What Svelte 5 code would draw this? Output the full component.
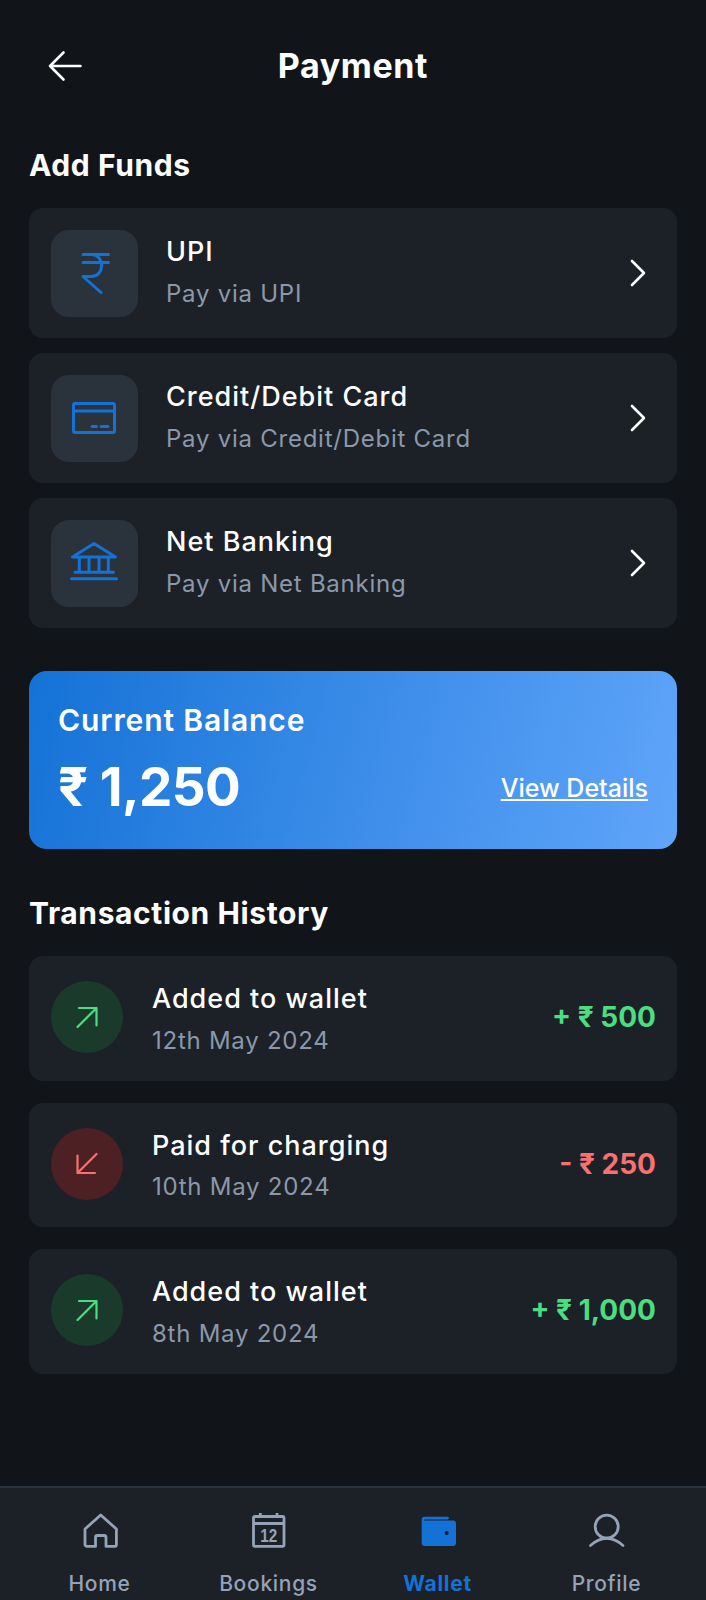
<script>
    const methods = [
        { id: 'upi', title: 'UPI', sub: 'Pay via UPI' },
        { id: 'card', title: 'Credit/Debit Card', sub: 'Pay via Credit/Debit Card' },
        { id: 'bank', title: 'Net Banking', sub: 'Pay via Net Banking' }
    ];

    const transactions = [
        { title: 'Added to wallet', date: '12th May 2024', amount: '+ ₹ 500', kind: 'in' },
        { title: 'Paid for charging', date: '10th May 2024', amount: '- ₹ 250', kind: 'out' },
        { title: 'Added to wallet', date: '8th May 2024', amount: '+ ₹ 1,000', kind: 'in' }
    ];
</script>

<div class="page">
    <header class="top">
        <button class="back" aria-label="Back">
            <svg width="36" height="36" viewBox="0 0 36 36" fill="none" stroke="currentColor" stroke-width="2.6" stroke-linecap="round" stroke-linejoin="round">
                <path d="M2 18H32.5M15.5 4.5L2 18L15.5 31.5" />
            </svg>
        </button>
        <h1>Payment</h1>
    </header>

    <main class="content">
        <h2>Add Funds</h2>
        <div class="methods">
            {#each methods as m}
                <div class="method">
                    <div class="method-icon">
                        <svg width="48" height="48" viewBox="0 0 48 48" fill="none" stroke="currentColor" stroke-width="3" stroke-linecap="round" stroke-linejoin="round">
                            {#if m.id === 'upi'}
                                <path d="M13 5.5H38.5M13 13.5H38.5M13 27.5L31 43.5M13 27.5H21.5C35 27.5 35 5.5 21.5 5.5" />
                            {:else if m.id === 'card'}
                                <rect x="3.5" y="9.5" width="41" height="29" rx="1.5" />
                                <path d="M3.5 17H44.5M22 32.5H26.5M31 32.5H38" />
                            {:else}
                                <path d="M2.5 18L24 4.5L45.5 18ZM9.3 18V33.3M19 18V33.3M29 18V33.3M38.3 18V33.3M5 33.3H43.5M1.5 39.7H46.5" />
                            {/if}
                        </svg>
                    </div>
                    <div class="stack">
                        <div class="title">{m.title}</div>
                        <div class="sub">{m.sub}</div>
                    </div>
                    <svg class="chevron" width="18" height="30" viewBox="0 0 18 30" fill="none" stroke="currentColor" stroke-width="2.6" stroke-linecap="round" stroke-linejoin="round">
                        <path d="M3 3L15 15L3 27" />
                    </svg>
                </div>
            {/each}
        </div>

        <section class="balance">
            <div class="balance-label">Current Balance</div>
            <div class="balance-row">
                <div class="balance-amount">₹ 1,250</div>
                <span class="balance-link">View Details</span>
            </div>
        </section>

        <h2 class="history">Transaction History</h2>
        <div class="transactions">
            {#each transactions as t}
                <div class="tx">
                    <div class="tx-icon {t.kind}">
                        <svg width="24" height="24" viewBox="0 0 24 24" fill="none" stroke="currentColor" stroke-width="2.2" stroke-linecap="round" stroke-linejoin="round">
                            {#if t.kind === 'in'}
                                <path d="M2.5 22L21.5 3M4 3H21.5V20.5" />
                            {:else}
                                <path d="M21.5 2L2.5 21M20 21H2.5V3.5" />
                            {/if}
                        </svg>
                    </div>
                    <div class="stack">
                        <div class="title">{t.title}</div>
                        <div class="sub">{t.date}</div>
                    </div>
                    <div class="tx-amount {t.kind}">{t.amount}</div>
                </div>
            {/each}
        </div>
    </main>

    <nav class="tabs">
        <div class="tab">
            <svg width="40" height="40" viewBox="0 0 40 40" fill="none" stroke="currentColor" stroke-width="2.8" stroke-linejoin="round">
                <path d="M5 19L20.7 5L36.4 19V34.4a2 2 0 0 1-2 2H26V27.5a2 2 0 0 0-2-2H17.5a2 2 0 0 0-2 2V36.4H7a2 2 0 0 1-2-2Z" />
            </svg>
            <span>Home</span>
        </div>
        <div class="tab">
            <svg width="40" height="40" viewBox="0 0 40 40" fill="none" stroke="currentColor" stroke-width="2.8" stroke-linejoin="round">
                <rect x="4.5" y="6.5" width="30.5" height="29.8" rx="1.5" />
                <path d="M4.5 13.5H35M11.3 3V8M28 3V8" />
                <text class="cal-day" x="19.7" y="31.7" text-anchor="middle" textLength="17" lengthAdjust="spacingAndGlyphs">12</text>
            </svg>
            <span>Bookings</span>
        </div>
        <div class="tab active">
            <svg width="40" height="40" viewBox="0 0 40 40" fill="currentColor">
                <path d="M6.7 6.7H29.5a1.4 1.4 0 0 1 0 2.8H7a1 1 0 0 0-1 1h29a3 3 0 0 1 3 3V33a3 3 0 0 1-3 3H6.7a3 3 0 0 1-3-3V9.7a3 3 0 0 1 3-3Z" />
                <circle cx="28.7" cy="23" r="2" fill="#1c2128" />
            </svg>
            <span>Wallet</span>
        </div>
        <div class="tab">
            <svg width="40" height="40" viewBox="0 0 40 40" fill="none" stroke="currentColor" stroke-width="2.8" stroke-linecap="round">
                <circle cx="19.7" cy="16.7" r="11.5" />
                <path d="M3.5 35.5Q19.7 21 36 35.5" />
            </svg>
            <span>Profile</span>
        </div>
    </nav>
</div>

<style>
    :global(body) {
        margin: 0;
        background: #11151a;
    }

    .page {
        display: flex;
        flex-direction: column;
        min-height: 1600px;
        background: #11151a;
        color: #fff;
        font-family: Inter, "Noto Sans", sans-serif;
    }

    .top {
        position: relative;
        display: flex;
        align-items: center;
        justify-content: center;
        height: 60px;
        margin-top: 36px;
    }

    .back {
        position: absolute;
        left: 48px;
        top: 12px;
        padding: 0;
        border: 0;
        background: none;
        color: #fff;
        line-height: 0;
    }

    h1 {
        margin: 0;
        font-size: 34px;
        font-weight: 700;
        letter-spacing: 0.6px;
        line-height: 60px;
    }

    .content {
        padding: 0 29px;
    }

    h2 {
        margin: 49px 0 23px;
        font-size: 30px;
        font-weight: 700;
        letter-spacing: 0.6px;
        line-height: 40px;
    }

    h2.history {
        margin-top: 44px;
    }

    .methods {
        display: flex;
        flex-direction: column;
        gap: 15px;
    }

    .method {
        display: flex;
        align-items: center;
        height: 130px;
        padding: 0 30px 0 22px;
        box-sizing: border-box;
        border-radius: 14px;
        background: #1c2128;
    }

    .method-icon {
        display: flex;
        align-items: center;
        justify-content: center;
        width: 87px;
        height: 87px;
        margin-right: 28px;
        padding-right: 2px;
        box-sizing: border-box;
        border-radius: 18px;
        background: #2a323c;
        color: #1472d6;
    }

    .stack {
        display: flex;
        flex: 1;
        flex-direction: column;
        gap: 1.5px;
    }

    .title {
        font-size: 27px;
        font-weight: 500;
        letter-spacing: 1px;
        line-height: 40px;
    }

    .sub {
        color: #8b98a9;
        font-size: 24px;
        letter-spacing: 0.75px;
        line-height: 40px;
    }

    .chevron {
        color: #fff;
    }

    .balance {
        height: 178px;
        margin-top: 43px;
        padding: 29px 29px 0;
        box-sizing: border-box;
        border-radius: 18px;
        background: linear-gradient(105deg, #1472d6, #60a5fa);
    }

    .balance-label {
        font-size: 30px;
        font-weight: 600;
        letter-spacing: 0.9px;
        line-height: 40px;
    }

    .balance-row {
        display: flex;
        align-items: center;
        justify-content: space-between;
        margin-top: 17px;
    }

    .balance-amount {
        font-size: 53px;
        font-weight: 700;
        letter-spacing: -0.6px;
        line-height: 60px;
    }

    .balance-link {
        padding-top: 2px;
        font-size: 25px;
        font-weight: 500;
        text-decoration: underline;
    }

    .transactions {
        display: flex;
        flex-direction: column;
        gap: 22px;
    }

    .tx {
        display: flex;
        align-items: center;
        height: 124.5px;
        padding: 0 21px 0 22px;
        box-sizing: border-box;
        border-radius: 14px;
        background: #1c2128;
    }

    .tx .stack {
        padding-top: 3px;
    }

    .tx-icon {
        display: flex;
        align-items: center;
        justify-content: center;
        width: 72px;
        height: 72px;
        margin: 0 29px 2px 0;
        border-radius: 50%;
    }

    .tx-icon.in {
        background: #1a3b2b;
        color: #4ade80;
    }

    .tx-icon.out {
        background: #4d2024;
        color: #f87171;
    }

    .tx-amount {
        margin-bottom: 2px;
        font-size: 28px;
        font-weight: 700;
    }

    .tx-amount.in {
        color: #4ade80;
    }

    .tx-amount.out {
        color: #f87171;
    }

    .tabs {
        display: flex;
        margin-top: auto;
        height: 114px;
        padding: 22px 15px 0;
        box-sizing: border-box;
        border-top: 2px solid #2a323c;
        background: #1c2128;
    }

    .tab {
        display: flex;
        flex: 1;
        flex-direction: column;
        align-items: center;
        gap: 20px;
        color: #94a3b8;
        font-size: 21px;
        font-weight: 500;
        letter-spacing: 0.7px;
        line-height: 28px;
    }

    .tab.active {
        color: #1472d6;
        font-weight: 700;
    }

    .cal-day {
        fill: currentColor;
        stroke: none;
        font-family: "Liberation Sans", sans-serif;
        font-size: 19px;
        font-weight: 700;
        letter-spacing: 0;
    }
</style>
